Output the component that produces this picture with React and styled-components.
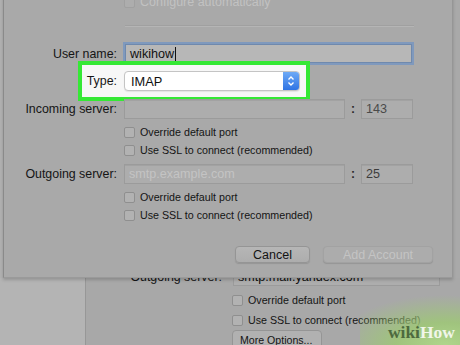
import styled, { createGlobalStyle } from "styled-components";

const GlobalStyle = createGlobalStyle`
  html, body {
    margin: 0;
    padding: 0;
  }
  body {
    background: #b4b4b4;
    font-family: "Liberation Sans", Arial, sans-serif;
    overflow: hidden;
  }
`;

const Screen = styled.div`
  position: relative;
  width: 460px;
  height: 345px;
  overflow: hidden;
  display: flex;
  flex-direction: column;
  background: #b4b4b4;
`;

const TopArea = styled.div`
  display: flex;
  height: 278px;
  flex-shrink: 0;
  background: #a9a9a9;
`;

const LeftStrip = styled.div`
  width: 3px;
  background: #b1b1b1;
`;

const Sheet = styled.div`
  position: relative;
  z-index: 1;
  width: 450px;
  height: 283px;
  margin-top: -5px;
  flex-shrink: 0;
  box-sizing: border-box;
  background: #a9a9a9;
  border-left: 1px solid #8a8a8a;
  border-right: 1px solid #969696;
  border-bottom: 1px solid #9a9a9a;
  box-shadow: 0 2px 3px rgba(0, 0, 0, 0.18);
  display: flex;
  flex-direction: column;
`;

const Row = styled.div`
  display: flex;
  align-items: center;
  gap: ${(p) => p.$gap ?? 7}px;
  height: ${(p) => p.$h ?? 20}px;
  margin-top: ${(p) => p.$mt ?? 0}px;
  flex-shrink: 0;
`;

const Label = styled.span`
  width: ${(p) => p.$w ?? 113}px;
  flex-shrink: 0;
  text-align: right;
  font-size: 12.4px;
  color: #151515;
  white-space: nowrap;
`;

const Separator = styled.div`
  margin: 16px 38px 0 121px;
  height: 1px;
  background: #b5b5b5;
  border-top: 1px solid #a0a0a0;
`;

const Field = styled.div`
  width: ${(p) => p.$w}px;
  height: ${(p) => p.$h ?? 20}px;
  box-sizing: border-box;
  flex-shrink: 0;
  display: flex;
  align-items: center;
  padding-left: 4px;
  background: ${(p) => (p.$focus ? "#b7b7b7" : "#adadad")};
  border: 1px solid ${(p) => (p.$focus ? "#6f89ad" : "#9b9b9b")};
  box-shadow: ${(p) => (p.$focus ? "0 0 0 2px #7f99bd" : "inset 0 1px 0 #a2a2a2")};
  font-size: 12.6px;
  color: ${(p) => p.$tone ?? "#111"};
  white-space: nowrap;
  overflow: hidden;
`;

const Caret = styled.span`
  display: inline-block;
  width: 1px;
  height: 14px;
  margin-left: 1px;
  background: #111;
`;

const Colon = styled.span`
  width: 16px;
  margin-left: -7px;
  margin-right: -7px;
  text-align: center;
  font-size: 12px;
  font-weight: bold;
  color: #2a2a2a;
`;

const CheckRow = styled.div`
  display: flex;
  align-items: center;
  gap: 5px;
  height: 14px;
  margin-top: ${(p) => p.$mt ?? 0}px;
  padding-left: ${(p) => p.$indent ?? 120}px;
  flex-shrink: 0;
  font-size: ${(p) => p.$size ?? 10.7}px;
  color: ${(p) => (p.$disabled ? "#c2c2c2" : "#141414")};
  white-space: nowrap;
`;

const Box = styled.span`
  width: 11px;
  height: 11px;
  box-sizing: border-box;
  flex-shrink: 0;
  border: 1px solid ${(p) => (p.$disabled ? "#a0a0a0" : "#8f8f8f")};
  border-radius: 2px;
  background: ${(p) => (p.$disabled ? "#adadad" : "#b2b2b2")};
`;

const Highlight = styled.div`
  display: flex;
  align-items: center;
  gap: 7px;
  width: 232px;
  height: 40px;
  margin: -2px 0 0 74px;
  box-sizing: border-box;
  flex-shrink: 0;
  border: 4px solid #35e835;
  background: #f7f7f7;
`;

const Select = styled.div`
  display: flex;
  width: 176px;
  height: 20px;
  box-sizing: border-box;
  border: 1px solid #c4c4c4;
  border-radius: 4px;
  background: #fff;
  box-shadow: 0 1px 1px rgba(0, 0, 0, 0.08);
  overflow: hidden;
`;

const SelectValue = styled.span`
  flex: 1;
  padding-left: 6px;
  display: flex;
  align-items: center;
  font-size: 12.8px;
  color: #111;
`;

const SelectArrow = styled.span`
  width: 16px;
  display: flex;
  align-items: center;
  justify-content: center;
  background: linear-gradient(#6eaaf6, #2f74e4);
`;

const ButtonRow = styled.div`
  display: flex;
  justify-content: flex-end;
  gap: 13px;
  margin-top: 24px;
  padding-right: 19px;
  flex-shrink: 0;
`;

const Button = styled.div`
  width: ${(p) => p.$w}px;
  height: 17px;
  box-sizing: border-box;
  display: flex;
  align-items: center;
  justify-content: center;
  border: 1px solid ${(p) => (p.$disabled ? "#a2a2a2" : "#959595")};
  border-radius: 4px;
  background: ${(p) => (p.$disabled ? "#acacac" : "linear-gradient(#b6b6b6, #adadad)")};
  box-shadow: 0 1px 1px rgba(0, 0, 0, 0.12);
  font-size: 12.5px;
  color: ${(p) => (p.$disabled ? "#c4c4c4" : "#141414")};
`;

const BottomArea = styled.div`
  display: flex;
  flex: 1;
`;

const LeftPane = styled.div`
  width: 85px;
  background: #b4b4b4;
`;

const BackWindow = styled.div`
  flex: 1;
  display: flex;
  flex-direction: column;
  background: #a8a8a8;
  border-left: 1px solid #979797;
  overflow: hidden;
`;

const SmallButton = styled.div`
  width: 90px;
  height: 20px;
  margin: 3px 0 0 146px;
  box-sizing: border-box;
  display: flex;
  align-items: center;
  padding-left: 7px;
  border: 1px solid #959595;
  border-radius: 4px;
  background: #b1b1b1;
  font-size: 10.6px;
  color: #141414;
  flex-shrink: 0;
`;

const Watermark = styled.div`
  position: absolute;
  right: 0;
  bottom: 0;
  width: 100px;
  height: 50px;
  display: flex;
  align-items: flex-end;
  justify-content: flex-end;
  padding: 0 5px 4px 0;
  box-sizing: border-box;
  background: radial-gradient(
    ellipse 110% 100% at 85% 100%,
    rgba(176, 216, 138, 0.95) 0%,
    rgba(158, 200, 118, 0.85) 45%,
    rgba(158, 200, 118, 0) 100%
  );
  font-family: "Liberation Serif", "Times New Roman", serif;
  font-weight: bold;
  font-size: 17.5px;
  line-height: 1;
`;

const Wiki = styled.span`
  color: #4d6a3e;
`;

const How = styled.span`
  color: #f1f6ea;
`;

const Chevrons = () => (
  <svg width="8" height="12" viewBox="0 0 8 12">
    <path d="M1.5 4.5 L4 2 L6.5 4.5 M1.5 7.5 L4 10 L6.5 7.5" fill="none" stroke="#fff" strokeWidth="1.4" />
  </svg>
);

export default function App() {
  return (
    <>
      <GlobalStyle />
      <Screen>
        <TopArea>
          <LeftStrip />
          <Sheet>
            <CheckRow $disabled $size={12.5}>
              <Box $disabled />
              Configure automatically
            </CheckRow>
            <Separator />
            <Row $mt={17} $h={19} $gap={8}>
              <Label>User name:</Label>
              <Field $focus $w={287} $h={19}>
                wikihow
                <Caret />
              </Field>
            </Row>
            <Highlight>
              <Label $w={35}>Type:</Label>
              <Select>
                <SelectValue>IMAP</SelectValue>
                <SelectArrow>
                  <Chevrons />
                </SelectArrow>
              </Select>
            </Highlight>
            <Row $mt={-2}>
              <Label>Incoming server:</Label>
              <Field $w={221} />
              <Colon>:</Colon>
              <Field $w={52} $tone="#4a4a4a">143</Field>
            </Row>
            <CheckRow $mt={6}>
              <Box />
              Override default port
            </CheckRow>
            <CheckRow $mt={4}>
              <Box />
              Use SSL to connect (recommended)
            </CheckRow>
            <Row $mt={7}>
              <Label>Outgoing server:</Label>
              <Field $w={221} $tone="#c4c4c4">smtp.example.com</Field>
              <Colon>:</Colon>
              <Field $w={52} $tone="#3c3c3c">25</Field>
            </Row>
            <CheckRow $mt={6}>
              <Box />
              Override default port
            </CheckRow>
            <CheckRow $mt={4}>
              <Box />
              Use SSL to connect (recommended)
            </CheckRow>
            <ButtonRow>
              <Button $w={75}>Cancel</Button>
              <Button $w={110} $disabled>Add Account</Button>
            </ButtonRow>
          </Sheet>
        </TopArea>
        <BottomArea>
          <LeftPane />
          <BackWindow>
            <Row $mt={-11} $h={19} $gap={11}>
              <Label $w={136}>Outgoing server:</Label>
              <Field $w={207} $h={19}>smtp.mail.yandex.com</Field>
            </Row>
            <CheckRow $mt={7} $indent={146}>
              <Box />
              Override default port
            </CheckRow>
            <CheckRow $mt={6} $indent={146}>
              <Box />
              Use SSL to connect (recommended)
            </CheckRow>
            <SmallButton>More Options...</SmallButton>
          </BackWindow>
        </BottomArea>
        <Watermark>
          <Wiki>wiki</Wiki>
          <How>How</How>
        </Watermark>
      </Screen>
    </>
  );
}
